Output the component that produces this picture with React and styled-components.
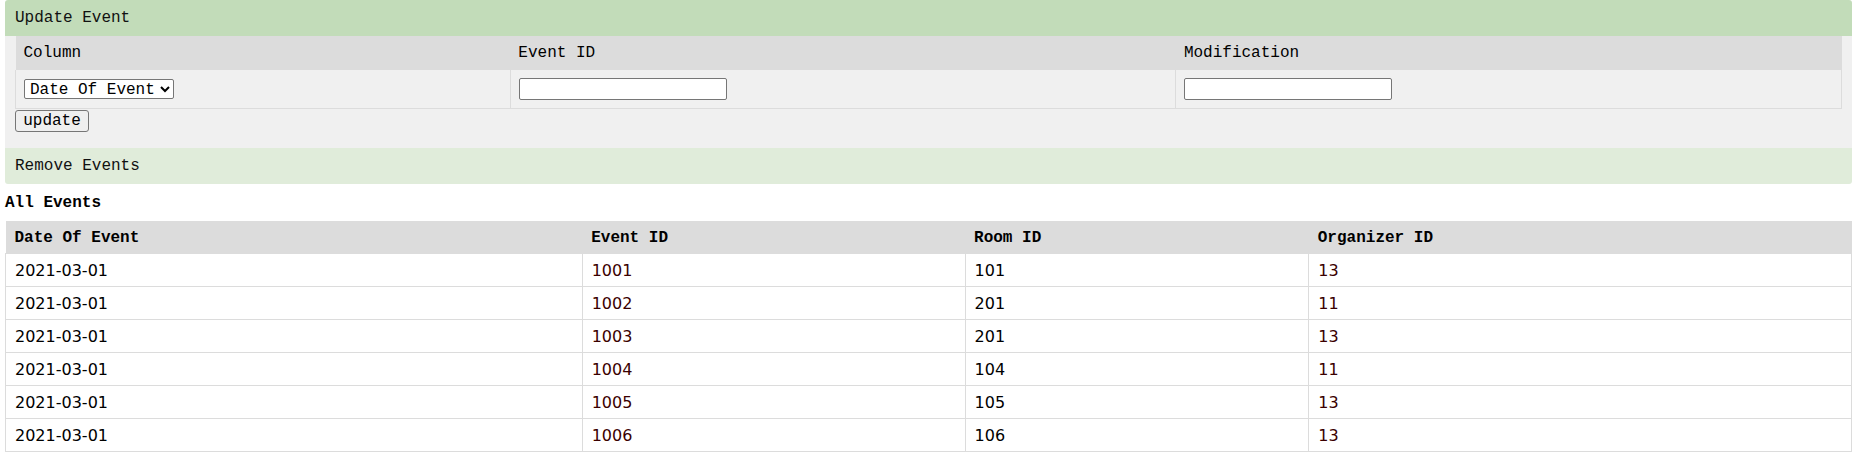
import React from "react";
import styled, { createGlobalStyle } from "styled-components";

const Global = createGlobalStyle`
  html, body { margin: 0; padding: 0; background: #fff; }
  body { font-family: "Liberation Mono", "DejaVu Sans Mono", monospace; font-size: 16px; color: #000; }
`;

const Page = styled.div`
  padding: 0 5px;
`;

const SectionBar = styled.div`
  height: 36px;
  line-height: 36px;
  padding: 0 10px;
  background: ${(p) => (p.$light ? "#e0ecda" : "#c2dcb9")};
  border-radius: ${(p) => (p.$light ? "0 0 3px 3px" : "3px 3px 0 0")};
  font-family: "Liberation Mono", monospace;
  font-size: 16px;
  color: #111;
`;

const Panel = styled.div`
  background: #f0f0f0;
  padding: 0 10px 16px;
`;

const FormTable = styled.table`
  width: 100%;
  border-collapse: collapse;
  table-layout: fixed;
`;

const Col = styled.col`
  width: ${(p) => p.$w};
`;

const FormTh = styled.th`
  background: #dcdcdc;
  text-align: left;
  font-weight: normal;
  font-family: "Liberation Mono", monospace;
  font-size: 16px;
  height: 34px;
  padding: 0 8px;
  box-sizing: border-box;
`;

const FormTd = styled.td`
  height: 38px;
  padding: 0 8px;
  box-sizing: border-box;
  border: 1px solid #dcdcdc;
  border-top: none;
  vertical-align: middle;
`;

const Select = styled.select`
  width: 150px;
  height: 20px;
  padding: 0 1px;
  font-family: "Liberation Mono", monospace;
  font-size: 16px;
  color: #000;
  background: #fff;
  border: 1px solid #767676;
  border-radius: 2px;
  display: block;
`;

const TextInput = styled.input`
  width: 208px;
  height: 22px;
  box-sizing: border-box;
  border: 1px solid #767676;
  border-radius: 2px;
  background: #fff;
  display: block;
  padding: 0 3px;
`;

const Button = styled.button`
  margin-top: 1px;
  height: 22px;
  width: 74px;
  padding: 0;
  font-family: "Liberation Mono", monospace;
  font-size: 16px;
  color: #000;
  background: #efefef;
  border: 1px solid #767676;
  border-radius: 3px;
  display: block;
`;

const Heading = styled.div`
  font-family: "Liberation Mono", monospace;
  font-weight: bold;
  font-size: 16px;
  line-height: 19px;
  padding: 10px 0 8px;
`;

const DataTable = styled.table`
  width: 100%;
  border-collapse: collapse;
  table-layout: fixed;
`;

const DataTh = styled.th`
  background: #dcdcdc;
  text-align: left;
  font-family: "Liberation Mono", monospace;
  font-weight: bold;
  font-size: 16px;
  height: 33px;
  padding: 2px 9px 0;
  box-sizing: border-box;
`;

const DataTd = styled.td`
  height: 33px;
  padding: 0 9px;
  box-sizing: border-box;
  border: 1px solid #dcdcdc;
  font-family: "DejaVu Sans", Verdana, sans-serif;
  font-size: 16px;
  color: ${(p) => (p.$alt ? "#3a0000" : "#000")};
`;

const events = [
  ["2021-03-01", "1001", "101", "13"],
  ["2021-03-01", "1002", "201", "11"],
  ["2021-03-01", "1003", "201", "13"],
  ["2021-03-01", "1004", "104", "11"],
  ["2021-03-01", "1005", "105", "13"],
  ["2021-03-01", "1006", "106", "13"],
];

export default function App() {
  return (
    <Page>
      <Global />
      <SectionBar>Update Event</SectionBar>
      <Panel>
        <FormTable>
          <colgroup>
            <Col $w="27.1%" />
            <Col $w="36.45%" />
            <Col $w="36.45%" />
          </colgroup>
          <thead>
            <tr>
              <FormTh>Column</FormTh>
              <FormTh>Event ID</FormTh>
              <FormTh>Modification</FormTh>
            </tr>
          </thead>
          <tbody>
            <tr>
              <FormTd>
                <Select defaultValue="date">
                  <option value="date">Date Of Event</option>
                  <option value="room">Room ID</option>
                  <option value="org">Organizer ID</option>
                </Select>
              </FormTd>
              <FormTd>
                <TextInput type="text" />
              </FormTd>
              <FormTd>
                <TextInput type="text" />
              </FormTd>
            </tr>
          </tbody>
        </FormTable>
        <Button>update</Button>
      </Panel>
      <SectionBar $light>Remove Events</SectionBar>
      <Heading>All Events</Heading>
      <DataTable>
        <colgroup>
          <Col $w="31.24%" />
          <Col $w="20.74%" />
          <Col $w="18.62%" />
          <Col $w="29.4%" />
        </colgroup>
        <thead>
          <tr>
            <DataTh>Date Of Event</DataTh>
            <DataTh>Event ID</DataTh>
            <DataTh>Room ID</DataTh>
            <DataTh>Organizer ID</DataTh>
          </tr>
        </thead>
        <tbody>
          {events.map((r, i) => (
            <tr key={i}>
              {r.map((c, j) => (
                <DataTd key={j} $alt={j % 2 === 1}>
                  {c}
                </DataTd>
              ))}
            </tr>
          ))}
        </tbody>
      </DataTable>
    </Page>
  );
}
